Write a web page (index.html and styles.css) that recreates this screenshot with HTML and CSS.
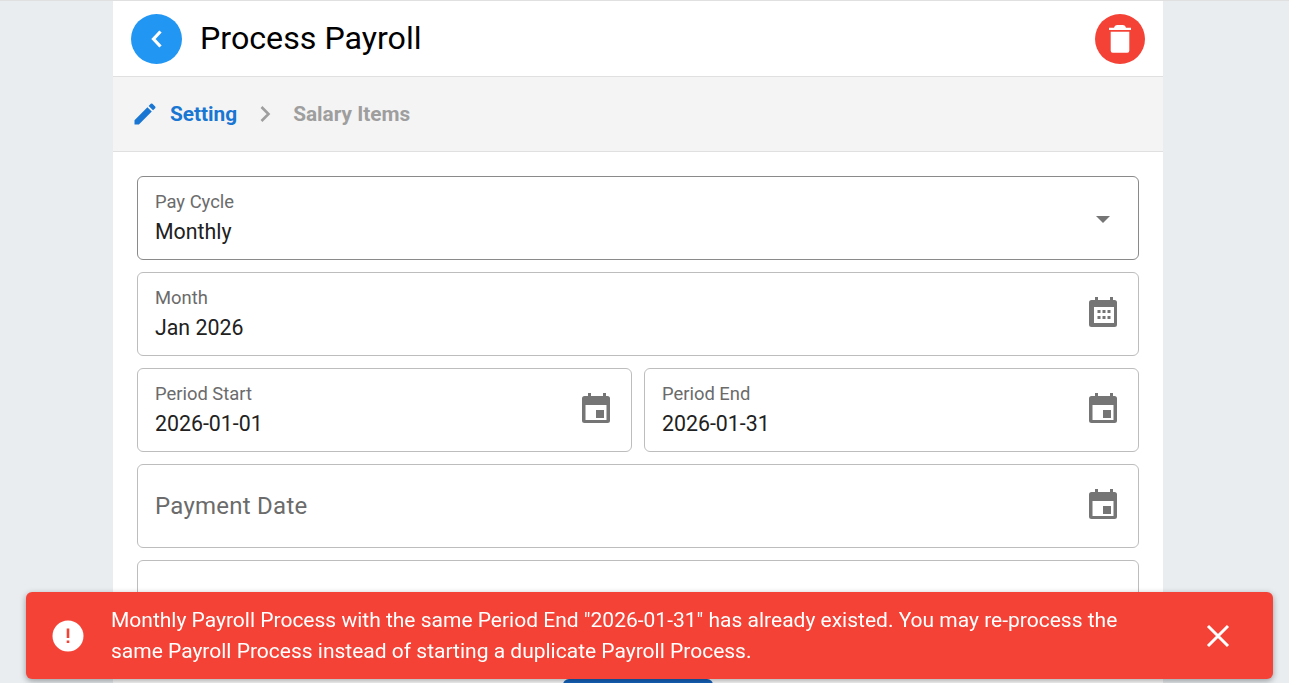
FILE: index.html
```html
<!DOCTYPE html>
<html lang="en">
<head>
  <meta charset="UTF-8">
  <title>Process Payroll</title>
  <link rel="stylesheet" href="styles.css">
</head>
<body>
  <div class="page">
    <div class="header">
      <button class="round-button back-button">
        <svg width="24" height="24" viewBox="0 0 24 24"><path d="M15.500 4.500L8.500 12l7 7.500" fill="none" stroke="#fff" stroke-width="3.200"/></svg>
      </button>
      <h1 class="title">Process Payroll</h1>
      <button class="round-button delete-button">
        <svg width="28" height="28" viewBox="0 0 28 28"><path fill="#fff" d="M3 2.700h22V5H3zM8 2.700Q8.500 0 11 0h6q2.500 0 3 2.700zM4.700 6.700h18.600v19q0 2-2 2H6.700q-2 0-2-2z"/></svg>
      </button>
    </div>

    <div class="steps">
      <svg class="step-icon" width="28" height="28" viewBox="0 0 24 24"><path fill="#1976d2" d="M3 17.250V21h3.750L17.810 9.940l-3.750-3.750L3 17.250zM20.710 7.040a1 1 0 0 0 0-1.410l-2.340-2.340a1 1 0 0 0-1.410 0l-1.830 1.830 3.750 3.750 1.830-1.830z"/></svg>
      <span class="step step-active">Setting</span>
      <svg class="step-arrow" width="24" height="24" viewBox="0 0 24 24"><path d="M8.500 5l7 7-7 7" fill="none" stroke="#9e9e9e" stroke-width="2.600"/></svg>
      <span class="step">Salary Items</span>
    </div>

    <div class="form">
      <div class="field field-select">
        <div class="field-text">
          <div class="field-label">Pay Cycle</div>
          <div class="field-value">Monthly</div>
        </div>
        <span class="select-arrow"></span>
      </div>

      <div class="field">
        <div class="field-text">
          <div class="field-label">Month</div>
          <div class="field-value">Jan 2026</div>
        </div>
        <svg class="field-icon" width="36" height="36" viewBox="0 0 36 36"><path fill="#757575" fill-rule="evenodd" d="M9 4h3v3h12V4h3v3h1.500A2.500 2.500 0 0 1 31 9.500v22a2.500 2.500 0 0 1-2.500 2.500h-23A2.500 2.500 0 0 1 3 31.500v-22A2.500 2.500 0 0 1 5.500 7H9zM8 14v16h20V14z"/><path fill="#757575" d="M11.500 17h3v3h-3zM16.500 17h3v3h-3zM21.500 17h3v3h-3zM11.500 23h3v3h-3zM16.500 23h3v3h-3zM21.500 23h3v3h-3z"/></svg>
      </div>

      <div class="field-row">
        <div class="field">
          <div class="field-text">
            <div class="field-label">Period Start</div>
            <div class="field-value">2026-01-01</div>
          </div>
          <svg class="field-icon" width="36" height="36" viewBox="0 0 36 36"><use href="#event"/></svg>
        </div>
        <div class="field">
          <div class="field-text">
            <div class="field-label">Period End</div>
            <div class="field-value">2026-01-31</div>
          </div>
          <svg class="field-icon" width="36" height="36" viewBox="0 0 36 36"><use href="#event"/></svg>
        </div>
      </div>

      <div class="field">
        <div class="field-placeholder">Payment Date</div>
        <svg class="field-icon" width="36" height="36" viewBox="0 0 36 36"><use href="#event"/></svg>
      </div>

      <div class="field"></div>

      <button class="next-button"></button>
    </div>
  </div>

  <div class="toast">
    <svg class="toast-icon" width="32" height="32" viewBox="0 0 32 32"><circle cx="16" cy="16" r="15.500" fill="#fff"/><path fill="#f44336" d="M14.700 8.500h2.600v9.500h-2.600zM14.700 20.500h2.600v2.600h-2.600z"/></svg>
    <div class="toast-text">Monthly Payroll Process with the same Period End "2026-01-31" has already existed. You may re-process the same Payroll Process instead of starting a duplicate Payroll Process.</div>
    <svg class="toast-close" width="24" height="24" viewBox="0 0 24 24"><path d="M2 2l20 20M22 2L2 22" fill="none" stroke="#fff" stroke-width="3"/></svg>
  </div>

  <!-- shared calendar icon -->
  <svg class="icon-defs" width="0" height="0">
    <symbol id="event" viewBox="0 0 36 36"><path fill="#757575" fill-rule="evenodd" d="M9 4h3v3h12V4h3v3h1.500A2.500 2.500 0 0 1 31 9.500v22a2.500 2.500 0 0 1-2.500 2.500h-23A2.500 2.500 0 0 1 3 31.500v-22A2.500 2.500 0 0 1 5.500 7H9zM6.500 16v15h21V16z"/><path fill="#757575" d="M17 21h8v8h-8z"/></symbol>
  </svg>
</body>
</html>
```

FILE: styles.css
```css
html, body {
  height: 100%;
  overflow: hidden;
}
body {
  margin: 0;
  font-family: Roboto, "Liberation Sans", sans-serif;
  background-color: #e9edf0;
  border-top: 1px solid #e0e0e0;
  box-sizing: border-box;
}
.page {
  width: 1050px;
  height: 100%;
  margin-left: 113px;
  background: white;
  overflow: hidden;
}
.header {
  display: flex;
  align-items: center;
  height: 75px;
  padding: 0 18px;
  border-bottom: 1px solid #e0e0e0;
}
.round-button {
  display: flex;
  align-items: center;
  justify-content: center;
  width: 50px;
  height: 50px;
  padding: 0;
  border: none;
  border-radius: 50%;
}
.back-button {
  width: 51px;
  background-color: #2196f3;
}
.delete-button {
  background-color: #f44336;
}
.title {
  flex: 1;
  margin: 0 0 2px 18px;
  font-size: 32.200px;
  font-weight: 400;
  color: black;
}
.steps {
  display: flex;
  align-items: center;
  height: 74px;
  padding-left: 18px;
  background-color: #f4f4f4;
  border-bottom: 1px solid #e0e0e0;
}
.step {
  font-size: 20.800px;
  font-weight: 700;
  color: #9e9e9e;
}
.step-active {
  margin-left: 11px;
  color: #1976d2;
}
.step-arrow {
  margin: 0 16px;
}
.form {
  display: flex;
  flex-direction: column;
  gap: 12px;
  padding: 24px;
}
.field {
  display: flex;
  flex: 1;
  align-items: center;
  min-height: 84px;
  padding: 0 17px;
  border: 1px solid #bdbdbd;
  border-radius: 6px;
  box-sizing: border-box;
}
.field-select {
  border-color: #8a8a8a;
}
.field-row {
  display: flex;
  gap: 12px;
}
.field-text {
  flex: 1;
  padding-bottom: 1px;
}
.field-label {
  font-size: 18.400px;
  line-height: 24px;
  color: #6b6b6b;
}
.field-value {
  margin-top: 4px;
  font-size: 21.330px;
  line-height: 28px;
  color: #212121;
}
.field-placeholder {
  flex: 1;
  font-size: 24px;
  letter-spacing: 0.25px;
  color: #6b6b6b;
}
.field-icon {
  flex-shrink: 0;
  margin: 0 -1px 6px 0;
}
.select-arrow {
  width: 0;
  height: 0;
  margin: 2px 11px 0 0;
  border-left: 7px solid transparent;
  border-right: 7px solid transparent;
  border-top: 7px solid #757575;
}
.next-button {
  flex-shrink: 0;
  align-self: center;
  width: 150px;
  height: 50px;
  margin-top: 23px;
  border: none;
  border-radius: 6px;
  background-color: #1565c0;
}
.toast {
  position: fixed;
  left: 26px;
  right: 16px;
  bottom: 4px;
  display: flex;
  align-items: center;
  height: 87px;
  padding: 0 43px 0 26px;
  background-color: #f44336;
  border-radius: 6px;
  box-shadow: 0 2px 6px rgba(0, 0, 0, 0.35);
  color: white;
  box-sizing: border-box;
}
.toast-text {
  flex: 1;
  margin: 0 65px 0 27px;
  font-size: 21px;
  line-height: 31px;
}
.icon-defs {
  position: absolute;
}
```
